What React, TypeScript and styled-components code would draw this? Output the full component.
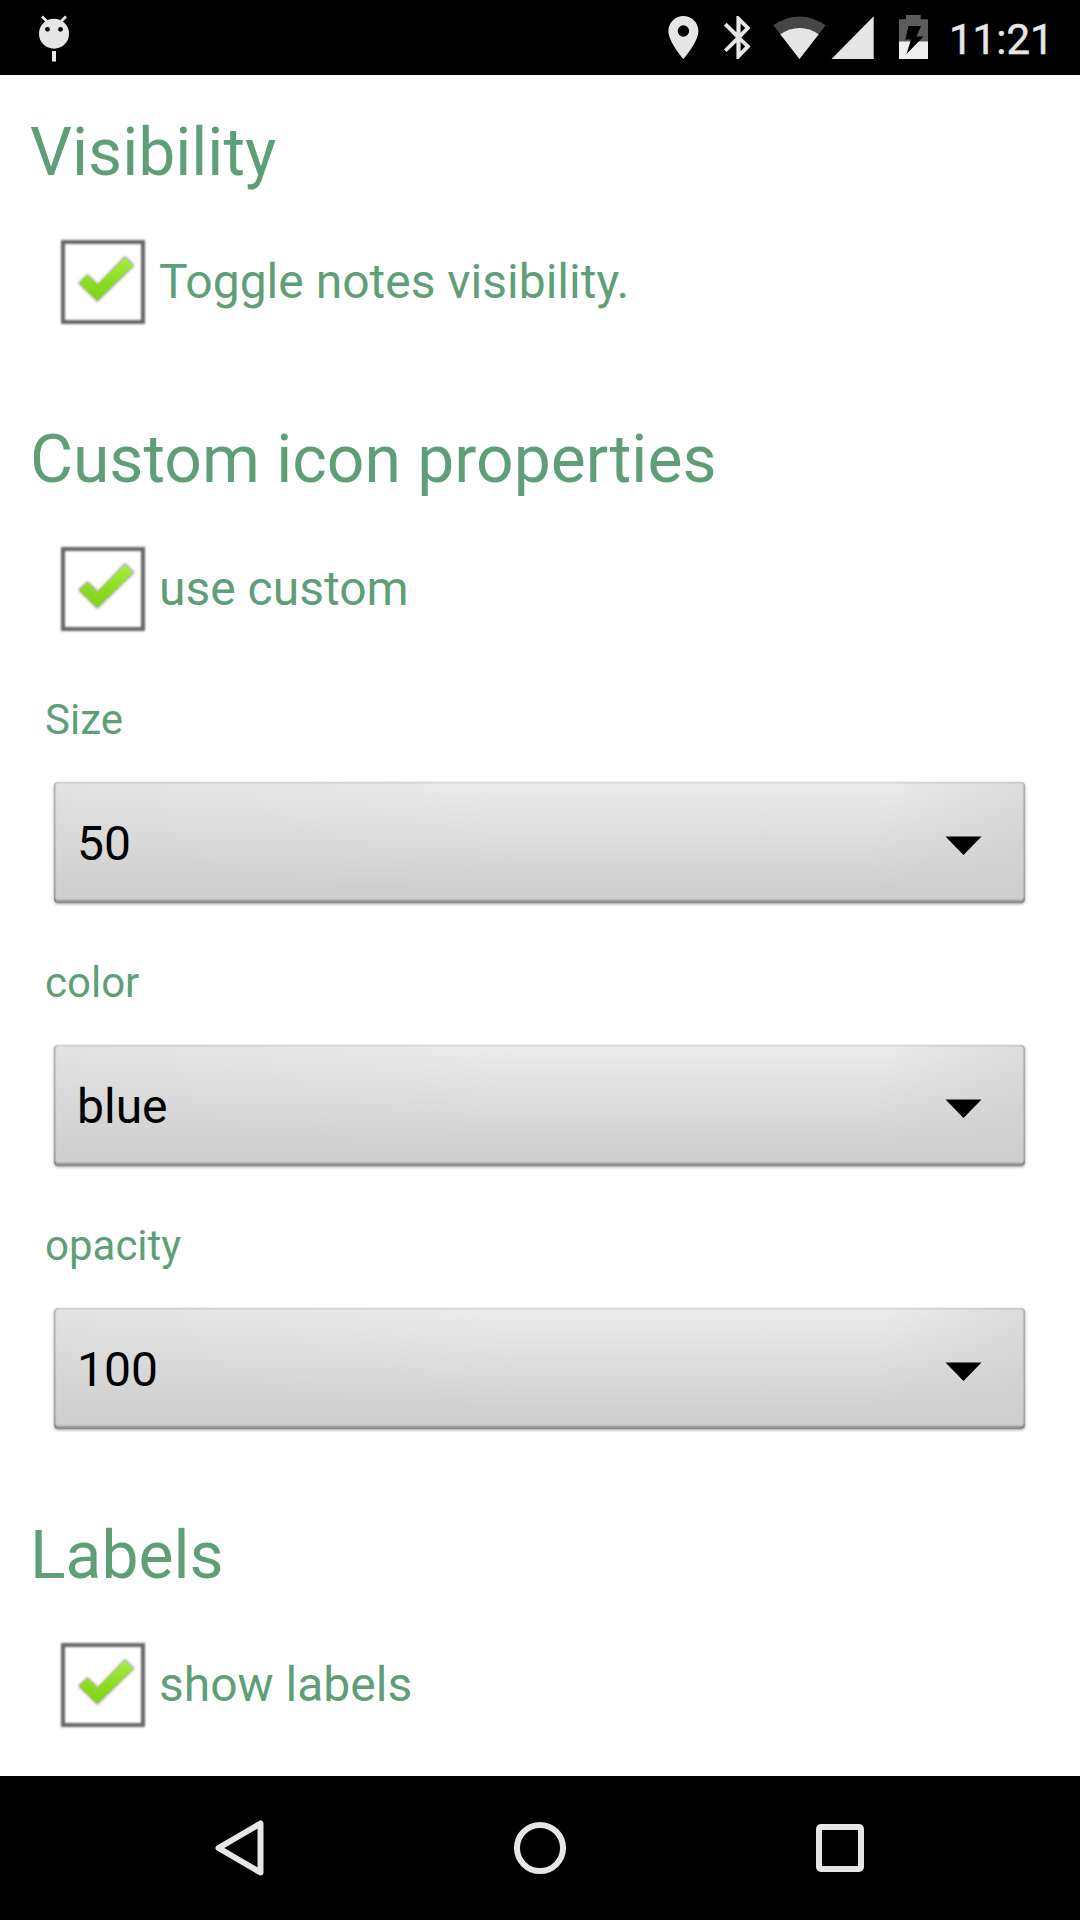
import React from "react";
import styled, { createGlobalStyle } from "styled-components";

const GREEN = "#5f9f78";
const LIGHT = "#e6e6e6";

const GlobalStyle = createGlobalStyle`
  * { box-sizing: border-box; }
  body { margin: 0; background: #fff; font-family: Roboto, "Noto Sans", sans-serif; }
`;

const Screen = styled.div`
  width: 1080px;
  height: 1920px;
  display: flex;
  flex-direction: column;
  overflow: hidden;
  background: #fff;
`;

const StatusBar = styled.header`
  flex: none;
  height: 75px;
  background: #000;
  display: flex;
  justify-content: space-between;
`;

const StatusIcons = styled.div`
  display: flex;
`;

const Clock = styled.time`
  width: 140px;
  padding-left: 9px;
  color: ${LIGHT};
  font-size: 42px;
  font-weight: 400;
  -webkit-text-stroke: 0.5px ${LIGHT};
  line-height: 79px;
  white-space: nowrap;
`;

const Content = styled.main`
  flex: 1;
  display: flex;
  flex-direction: column;
  padding: 39px 54px 0 30px;
`;

const Section = styled.section`
  display: flex;
  flex-direction: column;
  height: ${(p: { $height: number }) => p.$height}px;
`;

const Title = styled.h2`
  margin: 0 0 42px;
  color: ${GREEN};
  font-size: 66px;
  font-weight: 400;
  line-height: 78px;
  white-space: nowrap;
`;

const CheckRow = styled.label`
  display: flex;
  align-items: center;
  height: 96px;
  padding-left: 25px;
  gap: 8px;
  color: ${GREEN};
  font-size: 48px;
  line-height: 56px;
  white-space: nowrap;
`;

const Field = styled.div`
  display: flex;
  flex-direction: column;
  height: 263px;
`;

const FieldLabel = styled.span`
  padding-left: 15px;
  color: ${GREEN};
  font-size: 42px;
  line-height: 50px;
`;

const Spinner = styled.button`
  display: flex;
  align-items: center;
  justify-content: space-between;
  width: 971px;
  height: 121px;
  margin: 37px 0 0 24px;
  padding: 2px 43px 0 23px;
  border: 0;
  border-radius: 4px;
  color: #000;
  font: 400 48px/56px Roboto, "Noto Sans", sans-serif;
  background:
    linear-gradient(rgba(206, 206, 206, 0), #cecece 92%),
    linear-gradient(100deg, #e3e3e3, #ececec 45%, #ececec 84%, #dadada);
  box-shadow:
    inset 0 2px 1px rgba(0, 0, 0, 0.06),
    inset 2px 0 1px rgba(0, 0, 0, 0.12),
    inset -2px 0 1px rgba(0, 0, 0, 0.12),
    inset 0 -3px 2px rgba(0, 0, 0, 0.3),
    0 1px 3px rgba(0, 0, 0, 0.4);

  svg {
    margin-top: 4px;
  }
`;

const Fields = styled.div`
  margin-top: 58px;
`;

const NavBar = styled.nav`
  flex: none;
  height: 144px;
  background: #000;
  display: flex;
  justify-content: center;
`;

const NavButton = styled.button`
  width: 300px;
  height: 144px;
  padding: 0;
  border: 0;
  background: none;
  display: flex;
  align-items: center;
  justify-content: center;
`;

const DebugIcon = () => (
  <svg width="90" height="75" viewBox="0 0 90 75">
    <path d="M42 16.5l6 6M66 16.5l-6 6" stroke={LIGHT} strokeWidth="2.6" />
    <circle cx="54" cy="33.7" r="15" fill={LIGHT} />
    <circle cx="47.5" cy="29.3" r="2.4" />
    <circle cx="60.5" cy="29.3" r="2.4" />
    <path d="M52 51h4v10.5h-4z" fill={LIGHT} />
  </svg>
);

const SystemIcons = () => (
  <svg width="290" height="75" viewBox="650 0 290 75" fill={LIGHT}>
    <path
      fillRule="evenodd"
      d="M683.4 16c-8.3 0-15 6.7-15 15 0 11.2 15 28 15 28s15-16.8 15-28c0-8.3-6.7-15-15-15zm0 9.3a5.7 5.7 0 1 1 0 11.4a5.7 5.7 0 0 1 0-11.4z"
    />
    <path
      fillRule="evenodd"
      d="M750.6 28.1L738.5 16h-2.1v16.2L726.6 22.8l-2.7 2.7L735.8 37.5L723.9 49.4l2.7 2.7l9.8-9.7V59h2.1l12.1-12.5l-9.3-9zM740.6 23.4l4.6 4.7l-4.6 4.6zM745.2 46.5l-4.6 4.7v-9.3z"
    />
    <path d="M773.3 25.3Q799.5 7.5 825.7 25.3L799.5 59z" fill="#464646" />
    <path d="M780.3 34.3Q799.5 21.5 818.7 34.3L799.5 59z" />
    <path d="M873.7 16.3V59H831.5z" />
    <path d="M906 15h14.7v4.2H928V42h-29V19.2h7z" fill="#5c5c5c" />
    <path d="M899 41.5h29V59h-29z" fill="#efefef" />
    <path d="M908.5 26h12.5l-4.5 10.5h7L906.5 54l4.5-14.5h-5.7z" fill="#000" />
  </svg>
);

const CheckBox = () => (
  <svg width="96" height="96" viewBox="0 0 96 96">
    <defs>
      <linearGradient id="tick" x1="0" y1="0" x2="0" y2="1">
        <stop offset="0" stopColor="#a2ee3c" />
        <stop offset="0.55" stopColor="#8bdc22" />
        <stop offset="1" stopColor="#80d518" />
      </linearGradient>
      <filter id="soften" x="-10%" y="-10%" width="120%" height="120%">
        <feGaussianBlur stdDeviation="0.8" />
      </filter>
    </defs>
    <g filter="url(#soften)">
      <rect x="8" y="8" width="80" height="80" fill="none" stroke="#666" strokeWidth="4" />
      <path
        d="M25 49l7.500-7l10.500 10L70 24l7.500 7.500L42.300 66z"
        fill="#b9b9b4"
        stroke="#b9b9b4"
        strokeWidth="4"
        strokeLinejoin="round"
      />
    </g>
    <path
      d="M25.700 49.200l6.800-6.500l10 9.800L70 25.300l6.500 6.500L42.300 65z"
      fill="url(#tick)"
      stroke="url(#tick)"
      strokeWidth="2"
      strokeLinejoin="round"
    />
  </svg>
);

const Arrow = () => (
  <svg width="37" height="21" viewBox="0 0 37 21">
    <path d="M0.5 1.500h36L18.500 20z" />
  </svg>
);

const Check = ({ label }: { label: string }) => (
  <CheckRow>
    <CheckBox />
    <span>{label}</span>
  </CheckRow>
);

const Select = ({ label, value }: { label: string; value: string }) => (
  <Field>
    <FieldLabel>{label}</FieldLabel>
    <Spinner>
      <span>{value}</span>
      <Arrow />
    </Spinner>
  </Field>
);

export default function App() {
  return (
    <Screen>
      <GlobalStyle />
      <StatusBar>
        <DebugIcon />
        <StatusIcons>
          <SystemIcons />
          <Clock>11:21</Clock>
        </StatusIcons>
      </StatusBar>
      <Content>
        <Section $height={307}>
          <Title>Visibility</Title>
          <Check label="Toggle notes visibility." />
        </Section>
        <Section $height={1096}>
          <Title>Custom icon properties</Title>
          <Check label="use custom" />
          <Fields>
            <Select label="Size" value="50" />
            <Select label="color" value="blue" />
            <Select label="opacity" value="100" />
          </Fields>
        </Section>
        <Section $height={217}>
          <Title>Labels</Title>
          <Check label="show labels" />
        </Section>
      </Content>
      <NavBar>
        <NavButton aria-label="Back">
          <svg width="56" height="64" viewBox="212 1816 56 64" fill="none" stroke={LIGHT} strokeWidth="6" strokeLinejoin="round">
            <path d="M260.5 1823.5v49L218.5 1848z" />
          </svg>
        </NavButton>
        <NavButton aria-label="Home">
          <svg width="60" height="60" viewBox="0 0 60 60" fill="none" stroke={LIGHT} strokeWidth="6">
            <circle cx="30" cy="30" r="23" />
          </svg>
        </NavButton>
        <NavButton aria-label="Recents">
          <svg width="60" height="60" viewBox="0 0 60 60" fill="none" stroke={LIGHT} strokeWidth="6">
            <rect x="9" y="9" width="42" height="42" rx="2" />
          </svg>
        </NavButton>
      </NavBar>
    </Screen>
  );
}
